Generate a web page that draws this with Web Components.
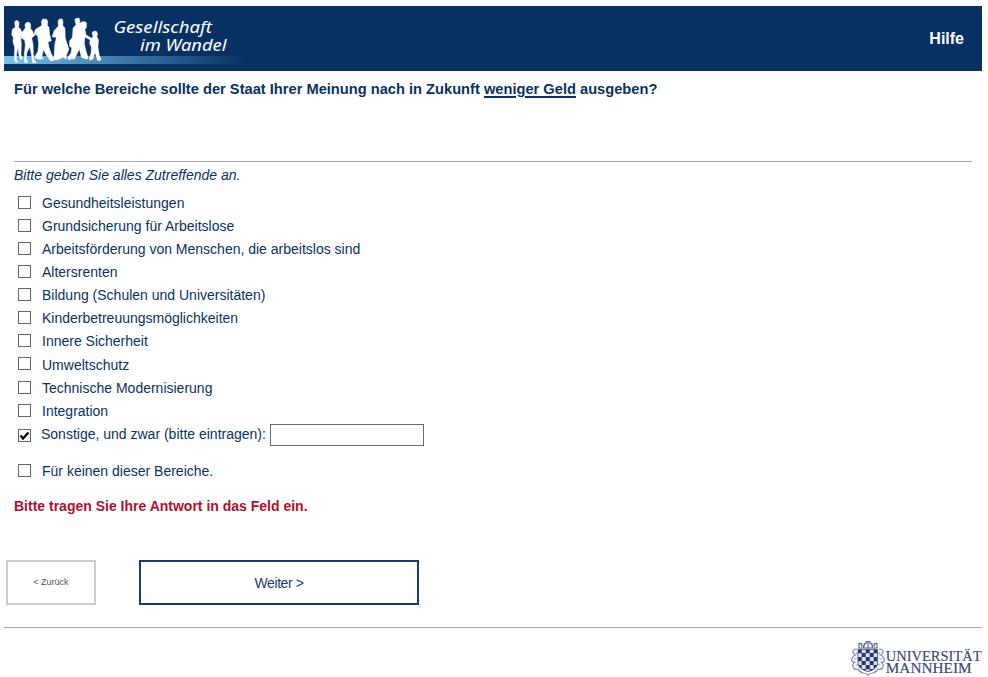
<!DOCTYPE html>
<html lang="de">
<head>
<meta charset="utf-8">
<title>Gesellschaft im Wandel</title>
<style>
body{margin:0;background:#fff;color:#0a3264;font:14px/16px "Liberation Sans",Arial,sans-serif}
</style>
</head>
<body>
<survey-page></survey-page>
<script>
const define=(name,html)=>customElements.define(name,class extends HTMLElement{
  constructor(){super();this.attachShadow({mode:'open'}).innerHTML=html;}
});

define('people-logo',`<style>:host{display:block;width:260px;height:65px;font-weight:400}svg{display:block}</style>
<svg width="260" height="65" viewBox="4 6 260 65">
<defs><linearGradient id="g"><stop offset="0" stop-color="#78c3ea"/><stop offset=".4" stop-color="#4686b5"/><stop offset="1" stop-color="#083163"/></linearGradient></defs>
<rect x="4" y="56" width="242" height="8" fill="url(#g)"/>
<g fill="#fff" stroke="#fff" stroke-width="1.500" transform="translate(8 14) scale(.3333)">
<path d="M20 24Q22 18 29 20Q35 24 33 32L31 40Q40 44 40 52L44 60L38 66L40 90L39 122L43 135L38 137L32 120L30 98L26 120L25 137L31 144L22 145L19 136L20 100L15 84L16 70L11 62L13 46L22 40Z"/>
<path d="M51 30Q55 23 64 25Q70 30 68 40L67 44Q74 47 76 60L82 62L76 68L71 72L75 90L76 120L79 138L85 146L74 146L70 120L65 98L56 118L55 136L60 145L49 145L49 118L52 94L50 78L40 72L37 62L46 50L52 42Z"/>
<path d="M100 23L104 15L116 16L119 22L118 34L123 40L125 62L130 80L120 84L123 100L129 118L137 132L141 138L128 141L113 120L107 106L101 130L106 134L94 136L82 132L82 126L90 112L92 88L89 66L78 58L83 46L102 34Z"/>
</g>
<g fill="#fff" stroke="#fff" stroke-width="1" transform="translate(54 14) scale(.3333)">
<path d="M12 20Q16 12 25 15Q29 22 26 34L33 42L34 72L39 88L45 106L38 122L36 136L26 130L16 136L4 138L0 132L2 92L7 70L0 70L-6 68L0 50L13 36Z"/>
<path d="M62 17Q66 10 76 13Q80 20 76 28L83 24Q94 19 98 28L97 42L93 46L96 62L112 72L108 77L93 70L91 88L96 110L103 132L97 136L82 130L76 106L65 128L61 136L53 134L47 139L40 132L51 116L53 102L46 96L47 80L55 70L57 42L66 32Z"/>
<path d="M114 56Q119 48 129 53Q133 60 129 68L134 78L132 98L136 124L142 138L131 140L123 116L117 136L107 139L106 132L111 118L112 98L107 90L108 76L117 68Z"/>
</g>
<g fill="#fff" font-family="'Noto Sans','Open Sans',sans-serif" font-size="16" font-style="italic">
<text x="113.500" y="33" textLength="98.500" lengthAdjust="spacingAndGlyphs">Gesellschaft</text><text x="140" y="50.500" textLength="86.500" lengthAdjust="spacingAndGlyphs">im Wandel</text></g>
</svg>`);

define('survey-header',`<style>:host{display:flex;justify-content:space-between;align-items:center;height:65px;background:#083163;color:#fff;padding-right:18px;font-size:16px;font-weight:700}</style><people-logo></people-logo><slot></slot>`);

define('check-option',`<style>
:host{display:flex;align-items:flex-start;height:var(--row,23.065px)}
i{box-sizing:border-box;flex:none;width:13px;height:13px;border:1px solid #666;background:#fff;margin-right:11px}
svg{display:none}:host([checked]) svg{display:block}:host([checked]) i{margin-right:10px}
span{margin-top:-.9px;white-space:nowrap}
:host([checked]) span{margin-top:-3px}
::slotted(text-field){margin:-5px 0 0 4px}
</style><i><svg width="11" height="11" viewBox="0 0 11 11"><path d="M1.500 5.500L4 8.500 9.500 2.500" fill="none" stroke="#000" stroke-width="2.200"/></svg></i><span><slot></slot></span><slot name="field"></slot>`);

define('text-field',`<style>:host{display:block;box-sizing:border-box;width:154px;height:22px;border:1px solid #6b6b6b;background:#fff}</style>`);

define('nav-button',`<style>:host{display:flex;box-sizing:border-box;align-items:center;justify-content:center;width:280px;height:45px;border:2px solid #183a78;color:#183a78;font-size:14px;letter-spacing:-.4px}
:host([back]){width:90px;padding-bottom:2px;border-color:#ccc;color:#555;font-size:9px;letter-spacing:0}</style><slot></slot>`);

define('university-logo',`<style>:host{display:block;width:132px;height:37px}svg{display:block}</style>
<svg width="132" height="37" viewBox="850 640 132 37">
<defs><pattern id="c" x="29" y="33" width="24" height="24" patternUnits="userSpaceOnUse"><path fill="#dfe2ec" d="M0 0h24v24H0z"/><path fill="#28376d" d="M0 0h12.500v12.500H0zM12 12h12v12H12z"/></pattern></defs>
<g transform="translate(848 638) scale(.3333)">
<g fill="none" stroke="#7e88a8" stroke-width="3.500">
<path d="M33 30V17h8v7h8v-7h5v-6h12v6h6v7h7v-7h8v13M47 29v-8M60 29V13M73 29v-8M31 30h57" stroke="#5f6a91"/>
<path d="M27 33Q13 33 15 44L22 51Q10 57 11 68Q14 73 20 73Q11 80 16 90Q22 96 31 93Q35 103 46 105Q54 105 60 112Q66 105 74 105Q85 103 89 93Q98 96 104 90Q109 80 100 73Q107 73 109 68Q110 57 98 51L105 44Q107 33 93 33"/>
<path d="M24 42L27 50M18 64L27 60M23 82L31 79M96 42L93 50M102 64L93 60M97 82L89 79" stroke-width="2.500"/>
</g>
<path d="M30 34H89V78Q87 93 60 101Q32 93 30 78Z" fill="url(#c)" stroke="#45527f" stroke-width="2.500"/>
</g>
<g fill="#3a4876" stroke="#3a4876" stroke-width=".15" font-family="'Liberation Serif',serif" font-size="13.600"><text x="885.700" y="661.300" textLength="96" lengthAdjust="spacingAndGlyphs">UNIVERSITÄT</text><text x="885.700" y="673" textLength="86" lengthAdjust="spacingAndGlyphs">MANNHEIM</text></g></svg>`);

const options=['Gesundheitsleistungen','Grundsicherung für Arbeitslose','Arbeitsförderung von Menschen, die arbeitslos sind','Altersrenten','Bildung (Schulen und Universitäten)','Kinderbetreuungsmöglichkeiten','Innere Sicherheit','Umweltschutz','Technische Modernisierung','Integration'];
define('survey-page',`<style>
:host{display:flow-root;box-sizing:border-box;height:677px;padding:6px 6px 0 4px;overflow:hidden}
h1{font-size:14.670px;line-height:17px;margin:0;font-weight:700}
h1 u{text-decoration-thickness:1.500px;text-underline-offset:2px}
.q{padding:10px 10px 0;height:80px}
.a{margin:0 10px;border-top:1px solid #a9a9a9;padding-top:5px;height:393px}
em{display:block;height:29px}
.o{padding-left:4px}
.error{color:#b30f2c;font-weight:700;margin-top:21px}
nav{display:flex;gap:43px;padding-left:2px;height:67px}
footer{border-top:1px solid #a9a9a9;padding-top:12px;display:flex;justify-content:flex-end}
</style><survey-header>Hilfe</survey-header>
<div class="q"><h1>Für welche Bereiche sollte der Staat Ihrer Meinung nach in Zukunft <u>weniger Geld</u> ausgeben?</h1></div>
<div class="a"><em>Bitte geben Sie alles Zutreffende an.</em>
<div class="o">${options.map(o=>`<check-option>${o}</check-option>`).join('')}
<check-option checked style="--row:35px;padding-top:2.350px">Sonstige, und zwar (bitte eintragen):<text-field slot="field"></text-field></check-option>
<check-option style="--row:13px">Für keinen dieser Bereiche.</check-option></div>
<div class="error">Bitte tragen Sie Ihre Antwort in das Feld ein.</div></div>
<nav><nav-button back>&lt; Zurück</nav-button><nav-button>Weiter &gt;</nav-button></nav>
<footer><university-logo></university-logo></footer>`);
</script>
</body>
</html>
